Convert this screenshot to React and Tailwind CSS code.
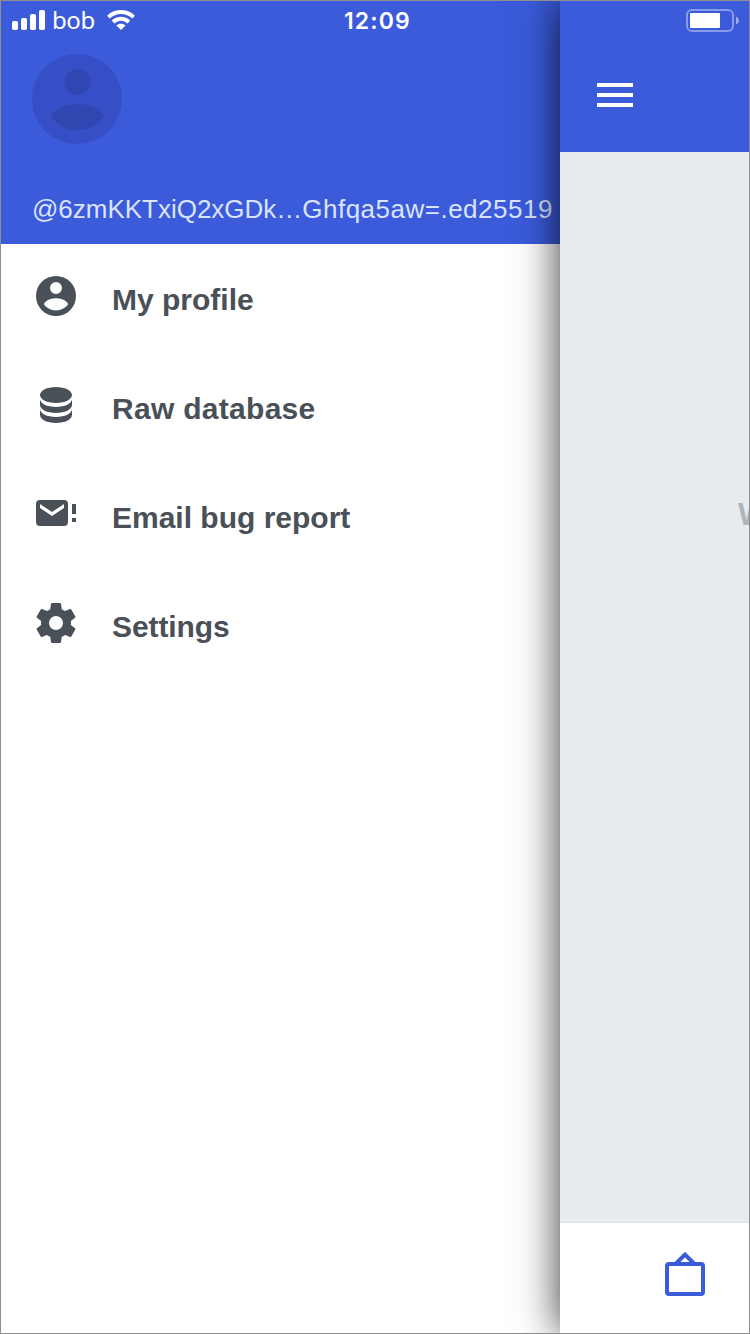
const PERSON =
  'M12,19.2C9.5,19.2 7.4,18.1 6.1,16.4Q5.8,16 6.1,15.6C7.3,13.9 9.5,13.1 12,13.1C14.5,13.1 16.7,13.9 17.9,15.6Q18.2,16 17.9,16.4C16.6,18.1 14.5,19.2 12,19.2M12,5A3,3 0 0,1 15,8A3,3 0 0,1 12,11A3,3 0 0,1 9,8A3,3 0 0,1 12,5'

const ITEMS = [
  {
    label: 'My profile',
    tracking: 'tracking-normal',
    path: PERSON + 'M12,2A10,10 0 0,0 2,12A10,10 0 0,0 12,22A10,10 0 0,0 22,12A10,10 0 0,0 12,2Z',
  },
  {
    label: 'Raw database',
    tracking: 'tracking-[0.29px]',
    path: 'M12,3C7.58,3 4,4.79 4,7C4,9.21 7.58,11 12,11C16.42,11 20,9.21 20,7C20,4.79 16.42,3 12,3M4,9V12C4,14.21 7.58,16 12,16C16.42,16 20,14.21 20,12V9C20,11.21 16.42,13 12,13C7.58,13 4,11.21 4,9M4,14V17C4,19.21 7.58,21 12,21C16.42,21 20,19.21 20,17V14C20,16.21 16.42,18 12,18C7.58,18 4,16.21 4,14Z',
  },
  {
    label: 'Email bug report',
    tracking: 'tracking-normal',
    path: 'M4,5H16A2,2 0 0,1 18,7V16A2,2 0 0,1 16,18H4A2,2 0 0,1 2,16V7A2,2 0 0,1 4,5ZM16,9V7L10,11L4,7V9L10,13ZM20,7H22V12H20ZM20,14H22V16H20Z',
  },
  {
    label: 'Settings',
    tracking: 'tracking-[-0.1px]',
    path: 'M12,15.5A3.5,3.5 0 0,1 8.5,12A3.5,3.5 0 0,1 12,8.5A3.5,3.5 0 0,1 15.5,12A3.5,3.5 0 0,1 12,15.5M19.43,12.97C19.47,12.65 19.5,12.33 19.5,12C19.5,11.67 19.47,11.34 19.43,11L21.54,9.37C21.73,9.22 21.78,8.95 21.66,8.73L19.66,5.27C19.54,5.05 19.27,4.96 19.05,5.05L16.56,6.05C16.04,5.66 15.5,5.32 14.87,5.07L14.5,2.42C14.46,2.18 14.25,2 14,2H10C9.75,2 9.54,2.18 9.5,2.42L9.13,5.07C8.5,5.32 7.96,5.66 7.44,6.05L4.95,5.05C4.73,4.96 4.46,5.05 4.34,5.27L2.34,8.73C2.21,8.95 2.27,9.22 2.46,9.37L4.57,11C4.53,11.34 4.5,11.67 4.5,12C4.5,12.33 4.53,12.65 4.57,12.97L2.46,14.63C2.27,14.78 2.21,15.05 2.34,15.27L4.34,18.73C4.46,18.95 4.73,19.03 4.95,18.95L7.44,17.94C7.96,18.34 8.5,18.68 9.13,18.93L9.5,21.58C9.54,21.82 9.75,22 10,22H14C14.25,22 14.46,21.82 14.5,21.58L14.87,18.93C15.5,18.67 16.04,18.34 16.56,17.94L19.05,18.95C19.27,19.03 19.54,18.95 19.66,18.73L21.66,15.27C21.78,15.05 21.73,14.78 21.54,14.63L19.43,12.97Z',
  },
]

function Signal() {
  return (
    <svg width="33" height="20" viewBox="0 0 33 20" fill="#fff">
      <rect x="0" y="11" width="6" height="9" rx="1.8" />
      <rect x="9" y="8" width="6" height="12" rx="1.8" />
      <rect x="18" y="4" width="6" height="16" rx="1.8" />
      <rect x="27" y="0" width="6" height="20" rx="1.8" />
    </svg>
  )
}

function Wifi() {
  return (
    <svg width="28" height="20" viewBox="0 0 28 20" fill="none" stroke="#fff" strokeWidth="3.9">
      <path d="M1.4 7.1C8.5 0.2 19.5 0.2 26.6 7.1" />
      <path d="M6.1 12C10.7 7.7 17.3 7.7 21.9 12" />
      <path d="M14 20L9.4 15.5C12 13.2 16 13.2 18.6 15.5Z" fill="#fff" stroke="none" />
    </svg>
  )
}

function StatusBar() {
  return (
    <div className="flex h-[38px] items-center pl-[11px]">
      <Signal />
      <span className="ml-[7px] w-[43px] font-['Noto_Sans',sans-serif] text-[24px] font-normal leading-[38px] tracking-[-0.4px] text-white">bob</span>
      <span className="ml-[12px] flex">
        <Wifi />
      </span>
      <span className="ml-[209px] pt-0.5 font-['Inter',sans-serif] text-[23px] font-semibold leading-9 tracking-[1.1px] text-white">12:09</span>
    </div>
  )
}

function Drawer() {
  return (
    <aside className="flex w-[559px] shrink-0 flex-col bg-white">
      <header className="flex h-[243px] flex-col bg-[#3b5bdb]">
        <StatusBar />
        <svg className="ml-[31px] mt-[15px] shrink-0" width="90" height="90" viewBox="0 0 90 90">
          <circle cx="45" cy="45" r="45" fill="#364fc7" />
          <path transform="translate(-6.3 -6.4) scale(4.3)" d={PERSON} fill="#3046b0" />
        </svg>
        <p className="ml-[31px] mt-[45px] whitespace-nowrap text-[26px] leading-10 text-[#dbe4ff]">
          <span className="tracking-[-0.02px]">@6zmKKTxiQ2xGDk…</span>
          <span className="tracking-[0.5px]">Ghfqa5aw=.ed25519</span>
        </p>
      </header>
      <nav className="flex flex-col">
        {ITEMS.map((item) => (
          <a key={item.label} className="flex h-[109px] pl-[31px] pt-7">
            <svg width="48" height="48" viewBox="0 0 24 24" fill="#495057" fillRule="evenodd">
              <path d={item.path} />
            </svg>
            <span className={`ml-8 mt-2 text-[30px] font-bold leading-10 text-[#495057] ${item.tracking}`}>{item.label}</span>
          </a>
        ))}
      </nav>
    </aside>
  )
}

function MainScreen() {
  return (
    <main className="relative z-10 flex min-w-0 flex-1 flex-col shadow-[0_0_40px_rgba(0,0,0,0.8)]">
      <header className="flex h-[151px] shrink-0 flex-col bg-[#3b5bdb]">
        <svg className="ml-[126px] mt-2" width="54" height="24" viewBox="0 0 54 24">
          <rect x="1" y="1" width="46" height="21" rx="5" fill="none" stroke="#fff" strokeOpacity=".4" strokeWidth="2" />
          <rect x="4" y="4" width="30" height="15" rx="1" fill="#fff" />
          <path d="M50 7.5Q53 9 53 11.5Q53 14 50 15.5Z" fill="#fff" fillOpacity=".5" />
        </svg>
        <div className="ml-[37px] mt-[50px] flex w-9 flex-col gap-1.5">
          <span className="h-1 bg-white" />
          <span className="h-1 bg-white" />
          <span className="h-1 bg-white" />
        </div>
      </header>
      <section className="flex-1 overflow-hidden bg-[#e7ebee] pl-[178px] pt-[343px]">
        <p className="whitespace-nowrap text-[31px] font-bold leading-10 text-[#adb5bd]">W</p>
      </section>
      <footer className="flex h-[111px] shrink-0 border-t border-[#dbe1e6] bg-white pl-[105px] pt-[29px]">
        <svg width="40" height="45" viewBox="0 0 40 45" fill="none" stroke="#3b5bdb" strokeWidth="4">
          <rect x="2" y="12" width="36" height="30" rx="2" />
          <path d="M10.5 12L20 2.6L29.5 12" />
        </svg>
      </footer>
    </main>
  )
}

export default function App() {
  return (
    <div className="flex h-[1334px] w-[750px] overflow-hidden border border-[#8f8f8f] font-['Liberation_Sans',Arial,sans-serif]">
      <Drawer />
      <MainScreen />
    </div>
  )
}
